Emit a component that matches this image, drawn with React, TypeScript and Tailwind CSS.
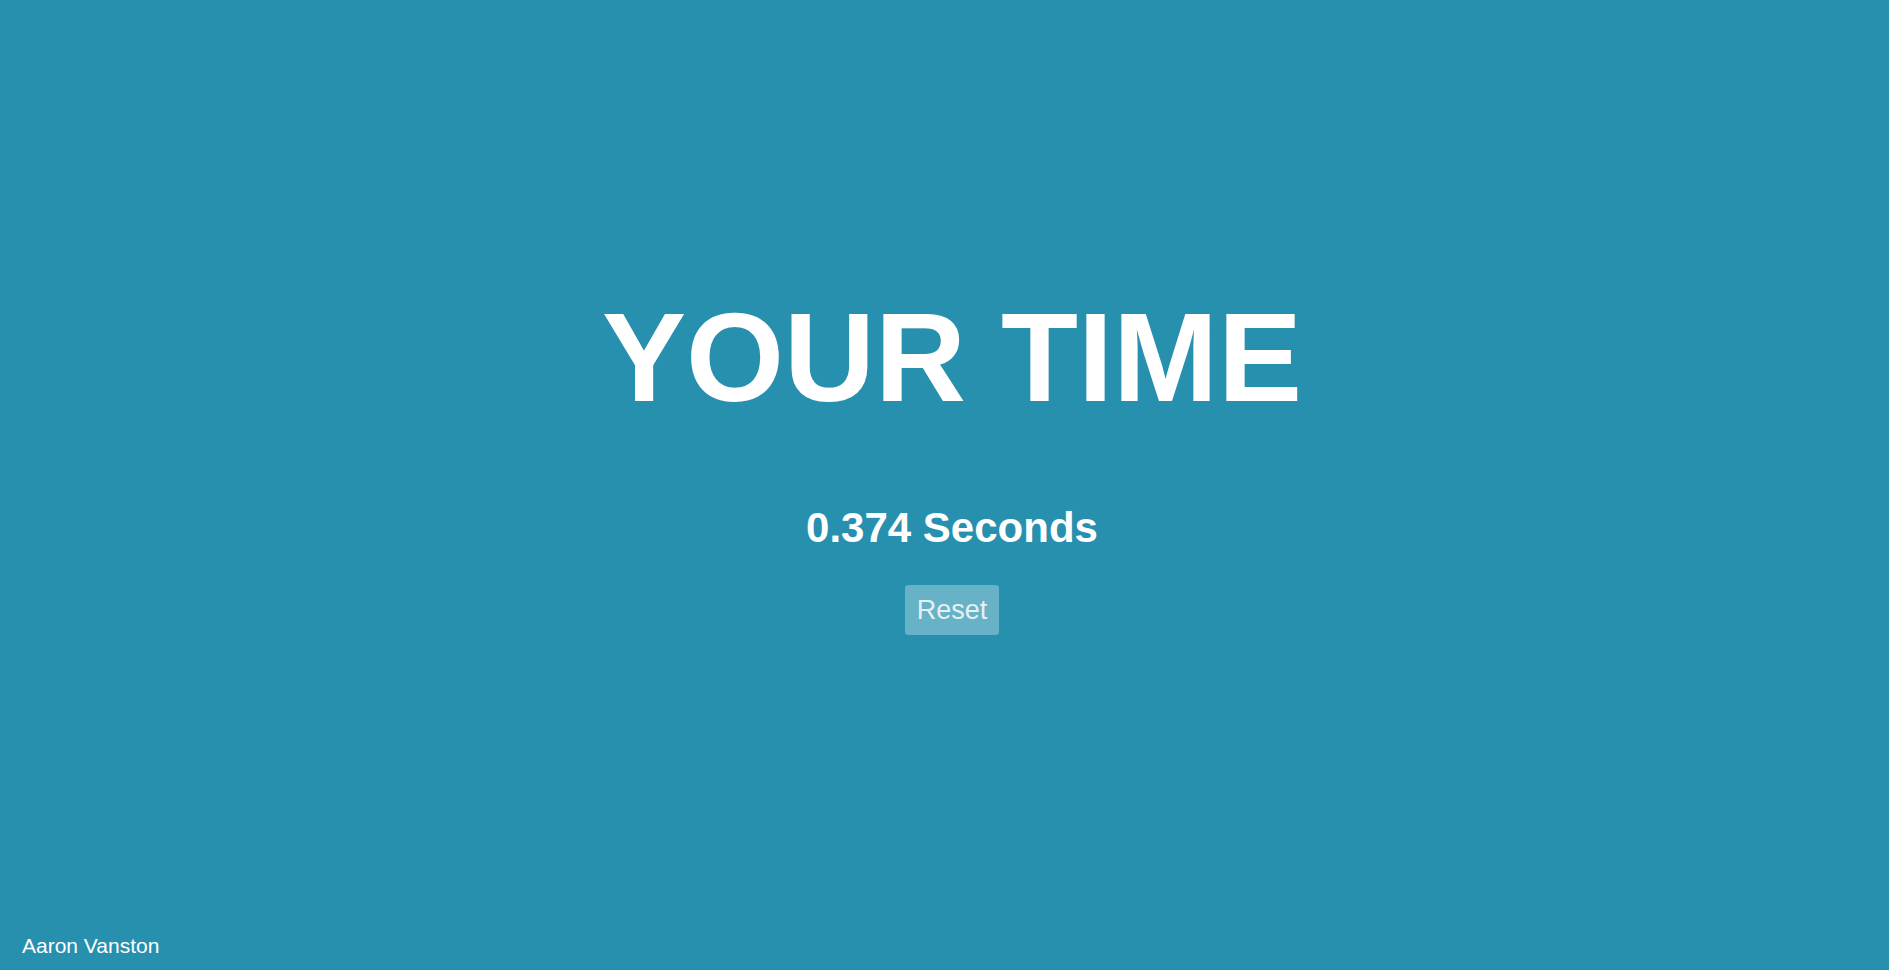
import React from "react";

export default function App() {
  return (
    <div
      className="w-full h-[970px] bg-[#2790ae] flex flex-col text-white overflow-hidden"
      style={{ fontFamily: '"Liberation Sans", Arial, sans-serif' }}
    >
      <div className="flex flex-col items-center pt-[295px] pl-[15px]">
        <h1 className="text-[126px] leading-none font-bold m-0">YOUR TIME</h1>
        <h2 className="text-[42px] leading-none font-bold mt-[86px]">0.374 Seconds</h2>
        <button className="mt-[36px] w-[94px] h-[50px] rounded-[3px] bg-[#67b2c7] text-[#e4f0f4] text-[27px] leading-none flex items-center justify-center">
          Reset
        </button>
      </div>
      <div className="flex-1" />
      <div className="pl-[22px] pb-[14px] text-[21px] leading-none">Aaron Vanston</div>
    </div>
  );
}
